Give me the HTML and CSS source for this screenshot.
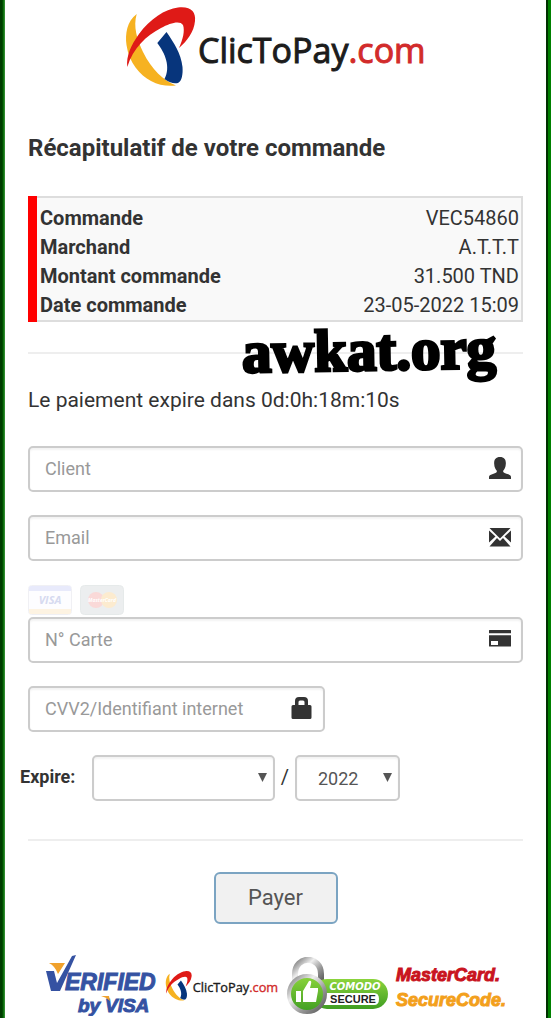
FILE: index.html
```html
<!DOCTYPE html>
<html lang="fr">
<head>
<meta charset="utf-8">
<meta name="viewport" content="width=device-width, initial-scale=1">
<title>ClicToPay.com</title>
<link rel="stylesheet" href="styles.css">
</head>
<body>
<main class="page">
  <header class="header">
    <svg class="logo" viewBox="0 0 302 80" role="img" aria-label="ClicToPay.com">
      <g id="clictopay">
        <path fill="#f6b221" d="M11.700 7C2 14 0 27 1.500 38C4 56 15 68 26 74C34 78.500 43 79.500 51 78.500C38 73 27 63 18 45C12 32 8 20 11.700 7Z"/>
        <path fill="#df1a17" d="M2.300 60C1 49 6 38 14 27C25 12 40 2 53 .500C66 -1 71 5 70 14C69 25 62 34 54 41C58 32 60 24 58 18C55 13 45 16 36 21C21 29 8 41 2.300 60Z"/>
        <path fill="#07357c" d="M41.500 25L32.300 36C40 46 46 60 39.500 72C45 76 49 77 53 76C57 74 58 67 57.500 60C56 46 49 36 41.500 25Z"/>
        <text class="brand-text" x="73" y="56">ClicToPay<tspan class="brand-com">.com</tspan></text>
      </g>
    </svg>
  </header>

  <form class="payment" onsubmit="return false">
    <h1 class="title">Récapitulatif de votre commande</h1>

    <div class="summary-box">
      <table class="summary">
        <tbody>
          <tr><th scope="row">Commande</th><td>VEC54860</td></tr>
          <tr><th scope="row">Marchand</th><td>A.T.T.T</td></tr>
          <tr><th scope="row">Montant commande</th><td>31.500 TND</td></tr>
          <tr><th scope="row">Date commande</th><td>23-05-2022 15:09</td></tr>
        </tbody>
      </table>
    </div>

    <div class="divider-wrap">
      <hr class="divider">
      <span class="watermark">awkat.org</span>
    </div>

    <p class="timer">Le paiement expire dans 0d:0h:18m:10s</p>

    <div class="fields">
      <div class="field">
        <input class="control" type="text" placeholder="Client" aria-label="Client">
        <svg class="icon" viewBox="0 0 22 22" aria-hidden="true"><path d="M11 0C6.500 0 4.800 3 5.200 7C5.300 10 6.500 12.500 7.800 13.800V15C6 17 0 17 0 20V22H22V20C22 17 16 17 14.200 15V13.800C15.500 12.500 16.700 10 16.800 7C17.200 3 15.500 0 11 0Z"/></svg>
      </div>
      <div class="field">
        <input class="control" type="email" placeholder="Email" aria-label="Email">
        <svg class="icon" viewBox="0 0 22 22" aria-hidden="true"><path d="M.5 2H21.500L11 12.500ZM0 4.500L6.500 10.500L0 16.500ZM22 4.500L15.500 10.500L22 16.500ZM8 12L11 15L14 12L21.500 20.500H.5Z"/></svg>
      </div>
      <div class="card-field">
        <div class="cards">
          <svg class="card" viewBox="0 0 44 30" role="img" aria-label="VISA">
            <rect x=".5" y=".5" width="43" height="29" rx="3" fill="#fdfdff" stroke="#f0f0f4"/>
            <path fill="#e8eafb" d="M1 6V3Q1 1 3 1H41Q43 1 43 3V6Z"/>
            <path fill="#fdf3e2" d="M1 24H43V27Q43 29 41 29H3Q1 29 1 27Z"/>
            <text class="visa-card" x="22" y="19">VISA</text>
          </svg>
          <svg class="card" viewBox="0 0 44 30" role="img" aria-label="MasterCard">
            <rect x=".5" y=".5" width="43" height="29" rx="4" fill="#eceeef" stroke="#e6eaea"/>
            <circle cx="16" cy="15" r="8" fill="#fad9d8"/>
            <circle cx="29" cy="15" r="8" fill="#fcebcf"/>
            <text class="mc-card" x="22" y="17">MasterCard</text>
          </svg>
        </div>
        <div class="field">
          <input class="control" type="text" placeholder="N° Carte" aria-label="N° Carte">
          <svg class="icon" viewBox="0 0 22 22" aria-hidden="true"><path fill-rule="evenodd" d="M0 2.500Q0 2 .5 2H21.500Q22 2 22 2.500V5.300H0ZM0 7.300H22V18Q22 18.500 21.500 18.500H.5Q0 18.500 0 18ZM2 13V17H9V13Z"/></svg>
        </div>
      </div>
      <div class="field field-short">
        <input class="control" type="text" placeholder="CVV2/Identifiant internet" aria-label="CVV2/Identifiant internet">
        <svg class="icon" viewBox="0 0 22 22" aria-hidden="true"><path fill-rule="evenodd" d="M4 8V4Q4 0 8 0H13Q17 0 17 4V8H19Q20.500 8 20.500 9.500V20.500Q20.500 22 19 22H2Q.5 22 .5 20.500V9.500Q.5 8 2 8ZM7.500 8H13.500V5Q13.500 3.500 12 3.500H9Q7.500 3.500 7.500 5Z"/></svg>
      </div>
      <div class="expiry">
        <label class="expiry-label" for="month">Expire:</label>
        <div class="select-wrap month">
          <select class="control select" id="month"><option selected></option><option>01</option><option>02</option><option>03</option></select>
          <svg class="arrow" viewBox="0 0 9 9" aria-hidden="true"><path d="M0 0H9L4.500 9Z"/></svg>
        </div>
        <span class="slash">/</span>
        <div class="select-wrap year">
          <select class="control select" id="year" aria-label="Année"><option selected>2022</option><option>2023</option></select>
          <svg class="arrow" viewBox="0 0 9 9" aria-hidden="true"><path d="M0 0H9L4.500 9Z"/></svg>
        </div>
      </div>
    </div>

    <hr class="divider">
    <button class="pay" type="submit">Payer</button>
  </form>

  <footer class="trust">
    <svg class="vbv" viewBox="0 0 112 61" role="img" aria-label="Verified by VISA">
      <path fill="#f0a12c" d="M3 8H19L12 19Q9 11 3 8Z"/>
      <path fill="#3552a2" d="M0 16H8L11 28L26 1L30 0L14 36H5Z"/>
      <text class="vbv-text vbv-large" x="19" y="35">ERIFIED</text>
      <text class="vbv-text vbv-small" x="32" y="57">by</text>
      <text class="vbv-text vbv-small" x="59" y="57">VISA</text>
      <path fill="#f0a12c" d="M55 41H63L64 46Q60 42 55 41Z"/>
    </svg>
    <svg class="mini-logo" viewBox="0 0 302 80" role="img" aria-label="ClicToPay.com"><use href="#clictopay"/></svg>
    <svg class="comodo" viewBox="0 0 102 58" role="img" aria-label="Comodo Secure">
      <defs>
        <linearGradient id="steel" x1="0" y1="0" x2="1" y2="1"><stop offset="0" stop-color="#777"/><stop offset=".35" stop-color="#eee"/><stop offset=".65" stop-color="#999"/><stop offset="1" stop-color="#555"/></linearGradient>
        <linearGradient id="leaf" x1="0" y1="0" x2="0" y2="1"><stop offset="0" stop-color="#8bd43c"/><stop offset="1" stop-color="#3f9d22"/></linearGradient>
      </defs>
      <path fill="none" stroke="url(#steel)" stroke-width="6" d="M9 27V17C9 -2 35 -2 35 17V27"/>
      <rect x="26" y="22" width="76" height="30" rx="15" fill="url(#leaf)"/>
      <path fill="#fff" d="M38 36H88Q93 36 93 42T88 48H34Z"/>
      <circle cx="21" cy="37" r="18" fill="url(#leaf)" stroke="url(#steel)" stroke-width="4"/>
      <path fill="#fff" d="M10 34H15V45H10ZM17 34L23 24Q26 23 25 27L24 31H32V34L30 45H17Z"/>
      <text class="comodo-top" x="69" y="33">COMODO</text>
      <text class="comodo-bottom" x="67" y="46">SECURE</text>
    </svg>
    <svg class="msc" viewBox="0 0 110 50" role="img" aria-label="MasterCard SecureCode">
      <text class="msc-text msc-red" x="1" y="20">MasterCard.</text>
      <text class="msc-text msc-orange" x="1" y="45">SecureCode.</text>
    </svg>
  </footer>
</main>
</body>
</html>
```
FILE: styles.css
```css
* { box-sizing: border-box; }

body {
  margin: 0;
  background: #fff;
  color: #333;
  font-family: Roboto, "Liberation Sans", sans-serif;
  font-size: 20px;
}

.page {
  padding: 7px 23px 2px;
  border-style: solid;
  border-width: 0 5px;
  border-image: linear-gradient(90deg, #003c00 0, #003c00 2px, #006000 3px, #3f9a3f 5px, #002800 5px, #003000 calc(100% - 3px), #008000 calc(100% - 3px), #008000 100%) 0 5 0 5;
  box-shadow: 0 2px 0 #ddd;
}

.header { display: flex; justify-content: center; }
.logo { width: 302px; height: 80px; overflow: visible; }

.brand-text { font: 400 34px "Open Sans", sans-serif; fill: #1c1c1c; stroke: #1c1c1c; stroke-width: 1px; }
.brand-com { fill: #d22b2b; stroke: #d22b2b; }

.title { margin: 46px 0 33px; font-size: 24px; line-height: 30px; font-weight: 700; }

.summary-box { border-left: 9px solid #f00; }
.summary {
  width: 100%;
  padding: 6px 2px 0 1px;
  border: 2px solid #ddd;
  border-left: 0;
  border-spacing: 0;
  background: #f9f9f9;
  line-height: 29px;
}
.summary th { padding: 0 2px; text-align: left; font-weight: 700; }
.summary td { padding: 0; text-align: right; }

.divider { width: 100%; margin: 0; border: 0; border-top: 2px solid #eee; }
.divider-wrap { position: relative; margin-top: 30px; }

.watermark {
  position: absolute;
  right: 27px;
  bottom: -26px;
  color: #000;
  font: 700 59px/60px "Liberation Serif", serif;
  -webkit-text-stroke: 3px #000;
  transform: rotate(-1deg);
}

.timer { margin: 31px 0; line-height: 30px; font-size: 21px; }

.fields { display: grid; gap: 23px; margin-bottom: 38px; }
.field, .select-wrap { position: relative; }
.field-short { width: 60%; }

.control {
  display: block;
  width: 100%;
  height: 46px;
  padding: 0 48px 2px 15px;
  border: 2px solid #ccc;
  border-radius: 5px;
  background: #fff;
  box-shadow: inset 0 2px 2px rgba(0, 0, 0, .05);
  color: #555;
  font: 18px Roboto, sans-serif;
}
.control::placeholder { color: #999; opacity: 1; }

.icon { position: absolute; top: 11px; right: 12px; width: 22px; height: 22px; fill: #333; }

.cards { display: flex; gap: 8px; margin: 1px 0 2px; }
.card { width: 44px; height: 30px; }
.visa-card { font: italic 700 11px "Open Sans", sans-serif; fill: #d6daf0; text-anchor: middle; }
.mc-card { font: italic 700 5px "Open Sans", sans-serif; fill: #fff; text-anchor: middle; }

.expiry { display: flex; align-items: center; margin-left: -8px; }
.expiry-label { width: 72px; padding-bottom: 3px; font-size: 18px; font-weight: 700; }
.select { appearance: none; padding: 0 24px 0 21px; }
.month { width: 183px; }
.year { width: 105px; }
.slash { width: 20px; padding-bottom: 2px; text-align: center; }
.arrow { position: absolute; top: 18px; right: 8px; width: 9px; height: 9px; fill: #555; pointer-events: none; }

.pay {
  display: block;
  min-width: 124px;
  margin: 31px auto;
  padding: 0 32px;
  border: 2px solid #7ba4c2;
  border-radius: 6px;
  background: #f1f1f1;
  color: #555;
  font: 22px/48px Roboto, sans-serif;
}

.trust { display: flex; justify-content: center; align-items: center; gap: 7px; }
.vbv { width: 112px; height: 61px; }
.mini-logo { width: 114px; height: 30px; }
.comodo { width: 102px; height: 58px; }
.msc { width: 110px; height: 50px; }

.vbv-text { font-family: "Liberation Sans", sans-serif; font-style: italic; font-weight: 700; fill: #3552a2; stroke: #3552a2; stroke-width: 1px; }
.vbv-large { font-size: 23px; }
.vbv-small { font-size: 19px; }
.comodo-top { font: italic 700 10px "DejaVu Sans", sans-serif; fill: #fff; text-anchor: middle; }
.comodo-bottom { font: 700 11px "Liberation Sans", sans-serif; fill: #222; text-anchor: middle; }
.msc-text { font: italic 700 18px "Liberation Sans", sans-serif; stroke-width: 1px; }
.msc-red { fill: #c91420; stroke: #c91420; }
.msc-orange { fill: #f3a01c; stroke: #f3a01c; }
```
